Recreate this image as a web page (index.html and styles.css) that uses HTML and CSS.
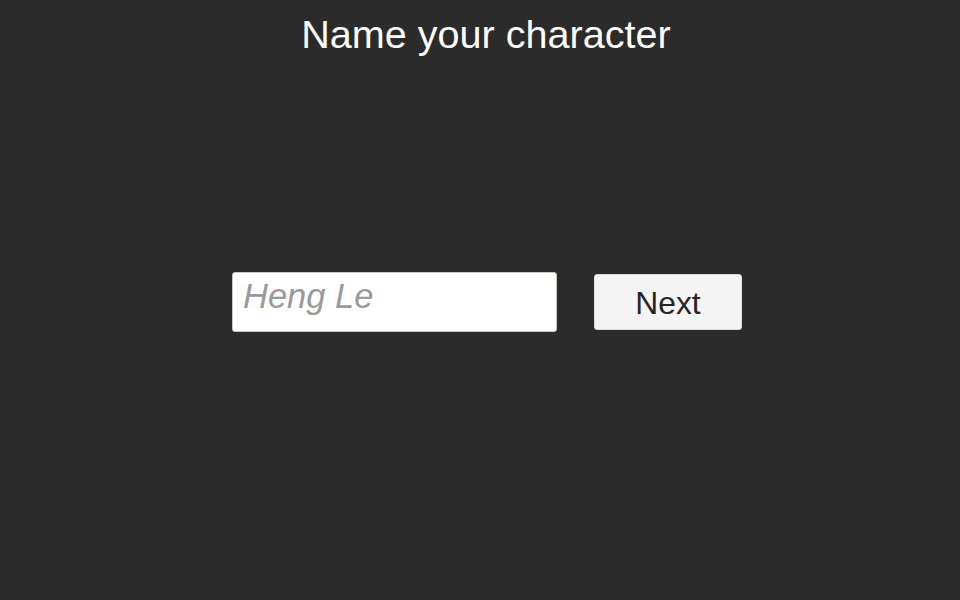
FILE: index.html
```html
<!DOCTYPE html>
<html lang="en">
<head>
<meta charset="utf-8">
<title>Name your character</title>
<link rel="stylesheet" href="styles.css">
</head>
<body>
<div class="screen">
  <h1 class="title">Name your character</h1>
  <div class="form-row">
    <input class="name-input" type="text" placeholder="Heng Le">
    <button class="next-btn" type="button">Next</button>
  </div>
</div>
</body>
</html>
```

FILE: styles.css
```css
html, body {
  margin: 0;
  padding: 0;
  background: #2b2b2b;
}

.screen {
  width: 960px;
  height: 600px;
  display: flex;
  flex-direction: column;
  font-family: "Liberation Sans", Arial, sans-serif;
}

.title {
  margin: 0;
  padding: 12px 0 0 12px;
  font-size: 39.6px;
  line-height: 44px;
  font-weight: normal;
  color: #ffffff;
  text-align: center;
}

.form-row {
  display: flex;
  align-items: center;
  gap: 37px;
  margin-top: 216px;
  padding-left: 232px;
}

.name-input {
  box-sizing: border-box;
  width: 325px;
  height: 60px;
  margin: 0;
  padding: 0 10px 12px 10px;
  border: 1px solid #cdc8bf;
  border-radius: 3px;
  background: #ffffff;
  font-family: "Liberation Sans", Arial, sans-serif;
  font-size: 34.5px;
  color: #333333;
  outline: none;
}

.name-input::placeholder {
  color: #9a9a9a;
  font-style: italic;
  opacity: 1;
}

.next-btn {
  box-sizing: border-box;
  width: 148px;
  height: 56px;
  margin: 0;
  padding: 3px 0 0 0;
  border: 1px solid #dcdcdc;
  border-radius: 3px;
  background: #f4f4f4;
  font-family: "Liberation Sans", Arial, sans-serif;
  font-size: 31.8px;
  color: #262626;
  cursor: pointer;
}
```
